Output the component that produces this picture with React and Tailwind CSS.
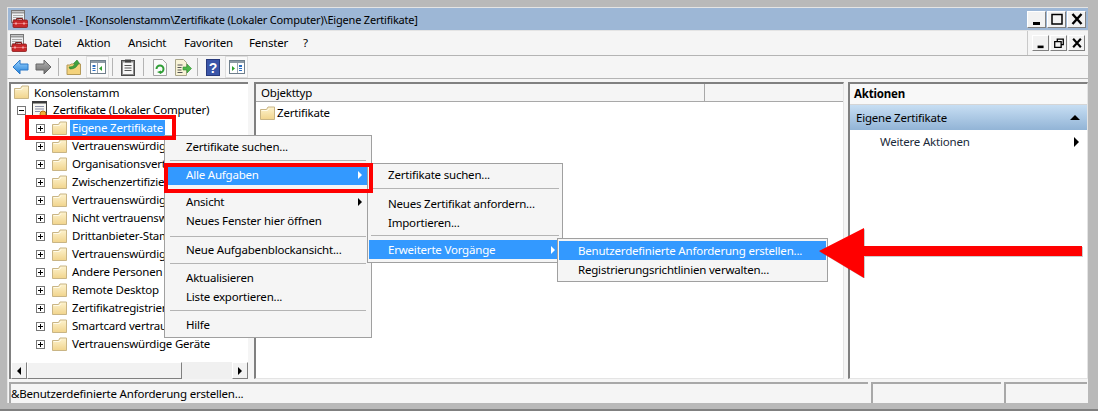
import React from 'react';

const treeItems = [
  'Vertrauenswürdige Stammzertifizierungsstellen',
  'Organisationsvertrauen',
  'Zwischenzertifizierungsstellen',
  'Vertrauenswürdige Herausgeber',
  'Nicht vertrauenswürdige Zertifikate',
  'Drittanbieter-Stammzertifizierungsstellen',
  'Vertrauenswürdige Personen',
  'Andere Personen',
  'Remote Desktop',
  'Zertifikatregistrierungsanforderungen',
  'Smartcard vertrauenswürdige Stämme',
  'Vertrauenswürdige Geräte',
];

const Folder = () => (
  <svg width="15" height="15" viewBox="0 0 15 15" className="shrink-0">
    <defs>
      <linearGradient id="folderFill" x1="0" y1="0" x2="0" y2="1">
        <stop offset="0" stopColor="#fdf3cf" />
        <stop offset="1" stopColor="#f1d48c" />
      </linearGradient>
    </defs>
    <path d="M.5 3.500h6l1.500-2.500h6.500v12.500H.5z" fill="url(#folderFill)" stroke="#c9b585" />
    <path d="M1.500 4.500h6l1.500-2" fill="none" stroke="#fffbe8" />
  </svg>
);

const Expander = ({ open }) => (
  <svg width="9" height="9" viewBox="0 0 9 9" className="shrink-0">
    <rect x="0.5" y="0.5" width="8" height="8" fill="#fff" stroke="#777" />
    <path d={open ? 'M2 4.500h5' : 'M2 4.500h5M4.500 2v5'} stroke="#000" />
  </svg>
);

const MmcIcon = () => (
  <svg width="17" height="18" viewBox="0 0 17 18">
    <rect x="0.500" y="0.500" width="13" height="12" fill="#eef0f2" stroke="#777" />
    <path d="M1 2.500h12" stroke="#9a9a9a" strokeWidth="2" />
    <path d="M2 5.500h10M2 7.500h10M2 9.500h6" stroke="#aaa" />
    <path d="M5.500 10v-1.500h6v1.500" fill="none" stroke="#7d1c1c" />
    <rect x="2" y="10" width="14.500" height="7.500" rx="1" fill="#c8282a" stroke="#8c1a1a" strokeWidth="0.8" />
    <path d="M2 13.500h14.500" stroke="#e8686a" />
    <path d="M5 12.500v2M13 12.500v2" stroke="#f4c0c0" strokeWidth="1.400" />
  </svg>
);

const CertIcon = () => (
  <svg width="17" height="18" viewBox="0 0 17 18" className="shrink-0">
    <rect x="0.500" y="0.500" width="14" height="16" fill="#f7f7f2" stroke="#3d3d3d" />
    <path d="M1 1.500h13" stroke="#3d3d3d" strokeWidth="2" />
    <path d="M3 5.500h9M3 8h9M3 10.500h5" stroke="#8a8fa8" />
    <circle cx="11" cy="13" r="3" fill="#efb13a" stroke="#b36f12" />
  </svg>
);

const ArrowIcon = ({ back, gray }) => (
  <svg width="17" height="16" viewBox="0 0 17 16">
    <defs>
      <linearGradient id={gray ? 'navg' : 'navb'} x1="0" y1="0" x2="0" y2="1">
        <stop offset="0" stopColor={gray ? '#b5b5b5' : '#9fd4ff'} />
        <stop offset="1" stopColor={gray ? '#6b6b6b' : '#1f7fd8'} />
      </linearGradient>
    </defs>
    <path
      d={back ? 'M8 1 1 8l7 7v-4h8V5H8z' : 'M9 1l7 7-7 7v-4H1V5h8z'}
      fill={`url(#${gray ? 'navg' : 'navb'})`}
      stroke={gray ? '#666' : '#2a78c8'}
    />
  </svg>
);

const UpFolder = () => (
  <svg width="16" height="17" viewBox="0 0 16 17">
    <path d="M1 6h3l1-1h9.500v10.500h-13.500z" fill="#f3d27c" stroke="#b59a58" />
    <path d="M3 8c3 0 5-1 6-3l-1.500-.5L11 1l2.500 3.500-1.500.5c-1 3-4 5-8 5z" fill="#3fa23f" stroke="#2c7d2c" strokeWidth="0.6" />
  </svg>
);

const PaneIcon = ({ right }) => (
  <svg width="16" height="14" viewBox="0 0 16 14">
    <rect x="0.500" y="0.500" width="15" height="13" fill="#fff" stroke="#6f7f8c" />
    <rect x="1" y="1" width="14" height="2" fill="#8d9aa5" />
    {right ? (
      <>
        <path d="M3 6v5l3-2.500z" fill="#2fa02f" />
        <path d="M10 5h3v2h-3zM10 8h3v1h-3zM10 10h3v1h-3z" fill="#2d6fc0" />
        <path d="M8.500 3v10" stroke="#9aa5ae" />
      </>
    ) : (
      <>
        <path d="M2.500 5h3v2h-3zM2.500 8h3v1h-3zM2.500 10h3v1h-3z" fill="#2d6fc0" />
        <path d="M12 6v5l-3-2.500z" fill="#2fa02f" />
        <path d="M7.500 3v10" stroke="#9aa5ae" />
      </>
    )}
  </svg>
);

const Clipboard = () => (
  <svg width="14" height="17" viewBox="0 0 14 17">
    <rect x="0.500" y="1.500" width="13" height="15" fill="#8d8d8d" stroke="#4a4a4a" />
    <rect x="2" y="3.500" width="10" height="11.500" fill="#f6f6f6" />
    <path d="M3.500 6.500h7M3.500 9h7M3.500 11.500h7" stroke="#555" />
    <rect x="4" y="0.500" width="6" height="3" fill="#444" />
  </svg>
);

const Refresh = () => (
  <svg width="14" height="17" viewBox="0 0 14 17">
    <path d="M.5.500h9l4 4v12H.5z" fill="#fafafa" stroke="#a3a3a3" />
    <path d="M3.500 10a3.500 3.500 0 1 1 3.500 3.500" fill="none" stroke="#2f9e35" strokeWidth="2" />
    <path d="M2 13.500l4-1.500v3.500z" fill="#2f9e35" transform="translate(2 -.5)" />
  </svg>
);

const ExportIcon = () => (
  <svg width="17" height="17" viewBox="0 0 17 17">
    <path d="M.5.500h8l3 3v13h-11z" fill="#f8f3d6" stroke="#a8a58a" />
    <path d="M2.500 6h5M2.500 8.500h4M2.500 11h4M2.500 13.500h5" stroke="#555" />
    <path d="M8 8h4V5l4.500 4.500L12 14v-3H8z" fill="#4db848" stroke="#2f8f2f" strokeWidth="0.6" />
  </svg>
);

const HelpIcon = () => (
  <svg width="14" height="17" viewBox="0 0 14 17">
    <rect width="14" height="17" fill="#3a55a8" />
    <rect x="0.500" y="0.500" width="13" height="16" fill="none" stroke="#27397c" />
    <text x="7" y="14" textAnchor="middle" fontFamily="Liberation Sans" fontWeight="700" fontSize="14" fill="#fff">?</text>
  </svg>
);

const Sep = ({ className }) => <div className={`w-px h-[18px] bg-[#b4b4b4] ${className}`} />;

const WinGlyph = ({ kind, small }) => {
  const s = small ? 12 : 14;
  return (
    <svg width={s} height={s} viewBox="0 0 14 14">
      {kind === 'min' && <rect x="3" y="10" width="7" height="3" fill="#000" />}
      {kind === 'max' && <path d="M2 2.500h10V12H2zM2 2.500" fill="none" stroke="#000" strokeWidth="1.500" />}
      {kind === 'close' && <path d="M2.500 2 11.500 12M11.500 2 2.500 12" stroke="#000" strokeWidth="2.400" />}
      {kind === 'restore' && (
        <path d="M5 5V2.500h7V9H9.500M2 5.500h7.500V12H2z" fill="none" stroke="#000" strokeWidth="1.500" />
      )}
    </svg>
  );
};

const WinBtn = ({ kind, small }) => (
  <div
    className={`flex items-center justify-center bg-[#f2f2f2] border border-t-white border-l-white border-r-[#808080] border-b-[#808080] ${
      small ? 'w-[17px] h-[16px]' : 'w-[19px] h-[17px]'
    }`}
  >
    <WinGlyph kind={kind} small={small} />
  </div>
);

const MenuItem = ({ label, className = '', active, arrow, indent = 'pl-[18px]', h = 'h-[19px]' }) => (
  <div
    className={`relative flex items-center whitespace-nowrap ${h} ${indent} ${
      active ? 'bg-[#3399ff] text-white' : 'text-black'
    } ${className}`}
  >
    {label}
    {arrow && (
      <span
        className={`absolute right-[6px] top-1/2 -translate-y-1/2 border-y-[4px] border-y-transparent border-l-[4px] ${
          active ? 'border-l-white' : 'border-l-black'
        }`}
      />
    )}
  </div>
);

const MenuSep = ({ className = '' }) => <div className={`h-px bg-[#b4b4b4] mx-[2px] ${className}`} />;

export default function App() {
  return (
    <div
      className="relative w-[1098px] h-[411px] overflow-hidden flex flex-col bg-[#b9b9b9] pt-[7px] pl-[7px] pr-[10px] pb-[6px] border-b-2 border-[#808080] text-[11.5px] leading-none text-black tracking-[-0.2px]"
      style={{ fontFamily: '"Noto Sans", sans-serif' }}
    >
      {/* Title bar */}
      <div className="h-[23px] shrink-0 flex items-center bg-[#9db7d6] border-t border-l border-[#e4e4e4] pl-[3px] pr-[2px]">
        <MmcIcon />
        <span className="ml-[3px] whitespace-nowrap text-[11px]">Konsole1 - [Konsolenstamm\Zertifikate (Lokaler Computer)\Eigene Zertifikate]</span>
        <div className="ml-auto flex gap-px">
          <WinBtn kind="min" />
          <WinBtn kind="max" />
          <WinBtn kind="close" />
        </div>
      </div>

      {/* Menu bar */}
      <div className="h-[25px] shrink-0 flex items-center bg-[#f5f5f5] border-t border-l border-[#e4e4e4] pl-[2px]">
        <MmcIcon />
        <div className="flex ml-[7px]">
          <span className="w-[43px]">Datei</span>
          <span className="w-[51px]">Aktion</span>
          <span className="w-[56px]">Ansicht</span>
          <span className="w-[65px]">Favoriten</span>
          <span className="w-[54px]">Fenster</span>
          <span>?</span>
        </div>
        <div className="ml-auto mr-[2px] self-stretch flex items-center gap-px pl-[4px] pr-[1px] border-l border-[#c9c9c9]">
          <WinBtn kind="min" small />
          <WinBtn kind="restore" small />
          <WinBtn kind="close" small />
        </div>
      </div>

      {/* Toolbar */}
      <div className="h-[24px] shrink-0 flex items-center bg-[#f5f5f5] border-t border-b border-l border-t-[#b4b4b4] border-b-[#b4b4b4] border-l-[#e4e4e4] pl-[4px]">
        <ArrowIcon back />
        <div className="ml-[6px]"><ArrowIcon gray /></div>
        <Sep className="ml-[6px]" />
        <div className="ml-[7px]"><UpFolder /></div>
        <div className="ml-[4px] w-[23px] h-[22px] flex items-center justify-center bg-[#fafafa] border border-[#dedede]">
          <PaneIcon />
        </div>
        <Sep className="ml-[3px]" />
        <div className="ml-[8px]"><Clipboard /></div>
        <Sep className="ml-[8px]" />
        <div className="ml-[9px]"><Refresh /></div>
        <div className="ml-[8px]"><ExportIcon /></div>
        <Sep className="ml-[5px]" />
        <div className="ml-[8px]"><HelpIcon /></div>
        <div className="ml-[5px] w-[23px] h-[22px] flex items-center justify-center bg-[#fafafa] border border-[#dedede]">
          <PaneIcon right />
        </div>
      </div>

      {/* Panels */}
      <div className="flex-1 min-h-0 flex bg-[#f5f5f5] pt-[3px] pb-[3px] pl-[1px] border-l border-[#e4e4e4]">
        {/* Tree */}
        <div className="w-[239px] shrink-0 relative bg-white border-t-2 border-l-2 border-[#808080] overflow-hidden">
          <div className="h-[17px] flex items-center pl-[3px] gap-[5px]">
            <Folder />
            <span>Konsolenstamm</span>
          </div>
          <div className="h-[18px] flex items-center pl-[6px]">
            <Expander open />
            <div className="ml-[6px] w-[17px] h-[18px]"><CertIcon /></div>
            <span className="ml-[4px] whitespace-nowrap">Zertifikate (Lokaler Computer)</span>
          </div>
          <div className="h-[18px] flex items-center pl-[25px]">
            <Expander />
            <div className="ml-[7px]"><Folder /></div>
            <span className="ml-[3px] px-[2px] h-[17px] flex items-center bg-[#3399ff] text-white whitespace-nowrap">Eigene Zertifikate</span>
          </div>
          {treeItems.map((name) => (
            <div key={name} className="h-[18px] flex items-center pl-[25px]">
              <Expander />
              <div className="ml-[7px]"><Folder /></div>
              <span className="ml-[5px] whitespace-nowrap">{name}</span>
            </div>
          ))}
          {/* Scrollbar */}
          <div className="absolute left-0 right-0 bottom-0 h-[17px] flex bg-[#f0f0f0]">
            <div className="w-[16px] flex items-center justify-center bg-[#f2f2f2] border border-t-white border-l-white border-r-[#808080] border-b-[#808080]">
              <span className="border-y-[4px] border-y-transparent border-r-[4px] border-r-black" />
            </div>
            <div className="w-[155px] bg-[#f2f2f2] border border-t-white border-l-white border-r-[#808080] border-b-[#808080]" />
            <div className="flex-1" />
            <div className="w-[16px] flex items-center justify-center bg-[#f2f2f2] border border-t-white border-l-white border-r-[#808080] border-b-[#808080]">
              <span className="border-y-[4px] border-y-transparent border-l-[4px] border-l-black" />
            </div>
          </div>
        </div>

        {/* List */}
        <div className="w-[590px] shrink-0 ml-[6px] bg-white border-t-2 border-l-2 border-[#808080] border-r border-b border-r-[#e4e4e4] border-b-[#e4e4e4]">
          <div className="h-[18px] flex bg-[#f5f5f5] border-b border-[#a8a8a8]">
            <div className="w-[449px] pl-[5px] flex items-center border-r border-[#a8a8a8]">Objekttyp</div>
          </div>
          <div className="flex items-center h-[18px] mt-[2px] pl-[4px] gap-[2px]">
            <Folder />
            <span>Zertifikate</span>
          </div>
        </div>

        {/* Actions */}
        <div className="flex-1 ml-[4px] bg-white border-t-2 border-l-2 border-[#808080] border-r border-b border-r-[#e4e4e4] border-b-[#e4e4e4]">
          <div className="h-[21px] flex items-center pl-[4px] font-bold bg-[#f8f8f8] border-b border-[#d5d5d5]">Aktionen</div>
          <div className="h-[25px] flex items-center pl-[6px] pr-[7px] bg-gradient-to-b from-[#c7def3] to-[#92b4d6]">
            Eigene Zertifikate
            <span className="ml-auto border-x-[5px] border-x-transparent border-b-[5px] border-b-black" />
          </div>
          <div className="h-[24px] flex items-center pl-[30px] pr-[8px] text-[#1a2a3a]">
            Weitere Aktionen
            <span className="ml-auto border-y-[5px] border-y-transparent border-l-[5px] border-l-black" />
          </div>
        </div>
      </div>

      {/* Status bar */}
      <div className="h-[21px] shrink-0 flex gap-[3px] bg-[#f5f5f5] pl-[1px] border-l border-[#e4e4e4]">
        <div className="w-[859px] flex items-center border-t-2 border-l-2 border-[#a8a8a8] whitespace-nowrap">&amp;Benutzerdefinierte Anforderung erstellen...</div>
        <div className="w-[130px] border-t-2 border-l-2 border-[#a8a8a8]" />
        <div className="w-[83px] border-t-2 border-l-2 border-[#a8a8a8]" />
      </div>

      {/* Context menu */}
      <div className="absolute left-[164px] top-[135px] w-[208px] h-[203px] bg-[#f5f5f5] border border-[#a0a0a0] pt-[1px] px-[3px]">
        <MenuItem label="Zertifikate suchen..." />
        <MenuSep className="mt-[4px]" />
        <MenuItem label="Alle Aufgaben" active arrow h="h-[20px]" className="mt-[4px]" />
        <MenuSep className="mt-[5px]" />
        <MenuItem label="Ansicht" arrow h="h-[18px]" className="mt-[2px]" />
        <MenuItem label="Neues Fenster hier öffnen" />
        <MenuSep className="mt-[6px]" />
        <MenuItem label="Neue Aufgabenblockansicht..." className="mt-[3px]" />
        <MenuSep className="mt-[4px]" />
        <MenuItem label="Aktualisieren" className="mt-[4px]" />
        <MenuItem label="Liste exportieren..." />
        <MenuSep className="mt-[4px]" />
        <MenuItem label="Hilfe" className="mt-[4px]" />
      </div>

      {/* Alle Aufgaben submenu */}
      <div className="absolute left-[367px] top-[163px] w-[196px] h-[100px] bg-[#f5f5f5] border border-[#a0a0a0] pt-[1px] px-[1px]">
        <MenuItem label="Zertifikate suchen..." indent="pl-[19px]" />
        <MenuSep className="mt-[4px]" />
        <MenuItem label="Neues Zertifikat anfordern..." indent="pl-[19px]" className="mt-[5px]" />
        <MenuItem label="Importieren..." indent="pl-[19px]" />
        <MenuSep className="mt-[3px]" />
        <MenuItem label="Erweiterte Vorgänge" indent="pl-[19px]" active arrow className="mt-[4px]" />
      </div>

      {/* Erweiterte Vorgänge submenu */}
      <div className="absolute left-[557px] top-[238px] w-[271px] h-[44px] bg-[#f5f5f5] border border-[#a0a0a0] pt-[2px] px-[1px]">
        <MenuItem label="Benutzerdefinierte Anforderung erstellen..." indent="pl-[19px]" active />
        <MenuItem label="Registrierungsrichtlinien verwalten..." indent="pl-[19px]" />
      </div>

      {/* Red highlight boxes */}
      <div className="absolute left-[25px] top-[115px] w-[151px] h-[25px] border-[4px] border-[#ff0000]" />
      <div className="absolute left-[164px] top-[163px] w-[209px] h-[30px] border-[4px] border-[#ff0000]" />

      {/* Red arrow */}
      <svg className="absolute left-[815px] top-[224px]" width="272" height="54" viewBox="0 0 272 54">
        <path d="M4 27 49 4v18h218v10H49v22z" fill="#000" opacity="0.2" transform="translate(1 1)" />
        <path d="M4 27 49 4v18h218v10H49v22z" fill="#ff0000" />
      </svg>
    </div>
  );
}
